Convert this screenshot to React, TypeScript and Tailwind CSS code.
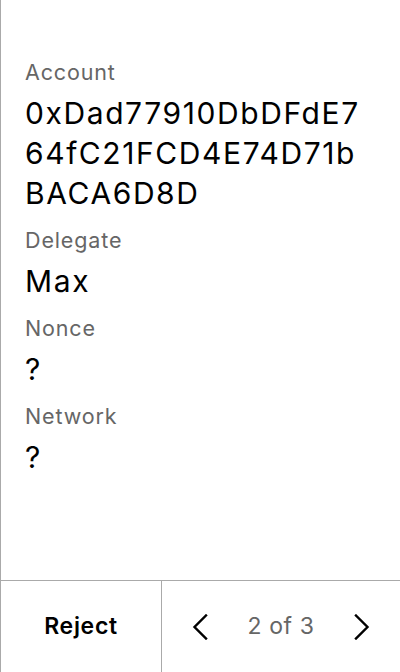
import React from "react";

function Field({ label, value }: { label: string; value: string }) {
  return (
    <div className="flex flex-col gap-[7px]">
      <p className="text-[21.5px] leading-[28px] tracking-[0.04em] text-[#666666]">{label}</p>
      <p className="w-[345px] break-all text-[30px] leading-[40px] tracking-[0.053em] text-black">
        {value}
      </p>
    </div>
  );
}

function Chevron({ dir }: { dir: "left" | "right" }) {
  return (
    <svg width="16" height="26" viewBox="0 0 16 26" fill="none">
      <polyline
        points={dir === "left" ? "14,1.5 2.5,13 14,24.5" : "2,1.5 13.5,13 2,24.5"}
        stroke="black"
        strokeWidth="2.4"
        strokeLinecap="square"
      />
    </svg>
  );
}

export default function App() {
  return (
    <div
      className="flex h-[672px] w-[400px] flex-col border-l border-[#aaaaaa] bg-white"
      style={{ fontFamily: "Inter, 'Noto Sans', sans-serif" }}
    >
      <div className="flex flex-1 flex-col gap-[13px] px-6 pt-[58px]">
        <Field label="Account" value="0xDad77910DbDFdE764fC21FCD4E74D71bBACA6D8D" />
        <Field label="Delegate" value="Max" />
        <Field label="Nonce" value="?" />
        <Field label="Network" value="?" />
      </div>
      <div className="flex h-[92px] border-t border-[#aaaaaa]">
        <button className="flex w-[160px] items-center justify-center text-[23px] font-semibold tracking-[0.03em] text-black">
          Reject
        </button>
        <div className="flex flex-1 items-center justify-between border-l border-[#aaaaaa] pl-[30px] pr-[30px]">
          <Chevron dir="left" />
          <span className="text-[23px] tracking-[0.025em] text-[#666666]">2 of 3</span>
          <Chevron dir="right" />
        </div>
      </div>
    </div>
  );
}
